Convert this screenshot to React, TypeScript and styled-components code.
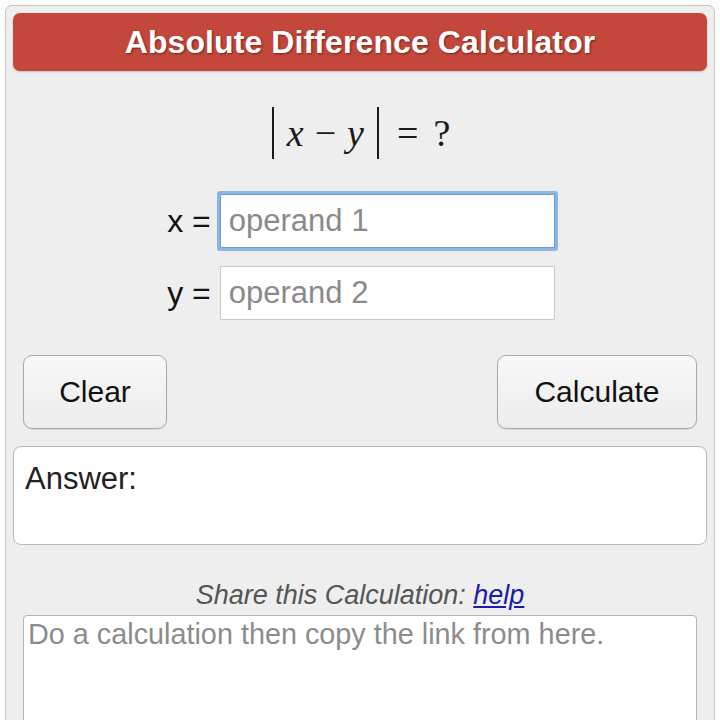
import styled, { createGlobalStyle } from "styled-components";

const GlobalStyle = createGlobalStyle`
  html, body {
    margin: 0;
    padding: 0;
    background: #fcfcfa;
  }
  body {
    font-family: "Liberation Sans", Arial, sans-serif;
    overflow: hidden;
  }
`;

const Panel = styled.div`
  margin: 5px;
  height: 760px;
  padding: 7px;
  background: #eeeeee;
  border: 1px solid #c6c6c6;
  border-radius: 7px;
  display: flex;
  flex-direction: column;
`;

const Header = styled.h1`
  margin: 0;
  height: 59px;
  background: #c3473a;
  border-radius: 7px;
  color: #ffffff;
  font-size: 32px;
  font-weight: bold;
  letter-spacing: 0.1px;
  display: flex;
  align-items: center;
  justify-content: center;
  text-shadow: 1px 1px 2px rgba(60, 0, 0, 0.55);
  box-shadow: 0 1px 2px rgba(0, 0, 0, 0.2);
`;

const Formula = styled.div`
  margin-top: 36px;
  height: 52px;
  display: flex;
  align-items: center;
  justify-content: center;
  font-family: "Liberation Serif", "Times New Roman", serif;
  font-size: 38px;
  color: #1a1a1a;
  padding-left: 2px;
`;

const Abs = styled.span`
  display: inline-flex;
  align-items: center;
  height: 52px;
  padding: 0 13px 0 13px;
  border-left: 2px solid #1a1a1a;
  border-right: 2px solid #1a1a1a;
  margin-right: 18px;
`;

const Var = styled.i`
  font-style: italic;
`;

const Minus = styled.span`
  margin: 0 11px;
`;

const Question = styled.span`
  margin-left: 15px;
`;

const Fields = styled.div`
  margin-top: 35px;
  display: flex;
  flex-direction: column;
  align-items: center;
  gap: 18px;
  padding-left: 2px;
`;

const FieldRow = styled.label`
  display: flex;
  align-items: center;
  gap: 9px;
  font-size: 32px;
  color: #111;
`;

const Input = styled.input<{ $focused?: boolean }>`
  box-sizing: border-box;
  width: 335px;
  height: 54px;
  padding: 0 8px;
  font-family: "Liberation Sans", Arial, sans-serif;
  font-size: 31px;
  color: #222;
  background: #ffffff;
  border: 1px solid ${(p) => (p.$focused ? "#6d9bd6" : "#c8c8c8")};
  border-radius: 1px;
  outline: none;
  box-shadow: ${(p) => (p.$focused ? "0 0 0 3px #8db4e6" : "none")};

  &::placeholder {
    color: #8a8a8a;
  }
`;

const ButtonRow = styled.div`
  margin-top: 35px;
  padding: 0 10px;
  display: flex;
  justify-content: space-between;
`;

const Button = styled.button<{ $width: number }>`
  width: ${(p) => p.$width}px;
  height: 74px;
  font-family: "Liberation Sans", Arial, sans-serif;
  font-size: 30px;
  color: #111;
  background: linear-gradient(#f8f8f8, #ececec);
  border: 1px solid #a9a9a9;
  border-radius: 9px;
  box-shadow: 0 1px 1px rgba(0, 0, 0, 0.08);
`;

const AnswerBox = styled.div`
  margin-top: 17px;
  height: 100px;
  box-sizing: border-box;
  padding: 14px 11px;
  background: #ffffff;
  border: 1px solid #b9b9b9;
  border-radius: 8px;
  font-size: 31px;
  color: #222;
`;

const ShareLine = styled.div`
  margin-top: 34px;
  text-align: center;
  font-size: 27px;
  line-height: 32px;
  font-style: italic;
  color: #555;
`;

const HelpLink = styled.a`
  color: #1c1ca8;
  text-decoration: underline;
`;

const ShareBox = styled.textarea`
  margin: 4px 10px 0;
  height: 160px;
  box-sizing: border-box;
  padding: 2px 4px;
  resize: none;
  background: #ffffff;
  border: 1px solid #b5b5b5;
  border-radius: 4px;
  font-family: "Liberation Sans", Arial, sans-serif;
  font-size: 28.8px;
  color: #222;
  outline: none;

  &::placeholder {
    color: #8c8c8c;
  }
`;

export default function App() {
  return (
    <>
      <GlobalStyle />
      <Panel>
        <Header>Absolute Difference Calculator</Header>

        <Formula>
          <Abs>
            <Var>x</Var>
            <Minus>−</Minus>
            <Var>y</Var>
          </Abs>
          <span>=</span>
          <Question>?</Question>
        </Formula>

        <Fields>
          <FieldRow>
            x =
            <Input $focused placeholder="operand 1" />
          </FieldRow>
          <FieldRow>
            y =
            <Input placeholder="operand 2" />
          </FieldRow>
        </Fields>

        <ButtonRow>
          <Button $width={144}>Clear</Button>
          <Button $width={200}>Calculate</Button>
        </ButtonRow>

        <AnswerBox>Answer:</AnswerBox>

        <ShareLine>
          Share this Calculation: <HelpLink href="#">help</HelpLink>
        </ShareLine>
        <ShareBox placeholder="Do a calculation then copy the link from here." />
      </Panel>
    </>
  );
}
